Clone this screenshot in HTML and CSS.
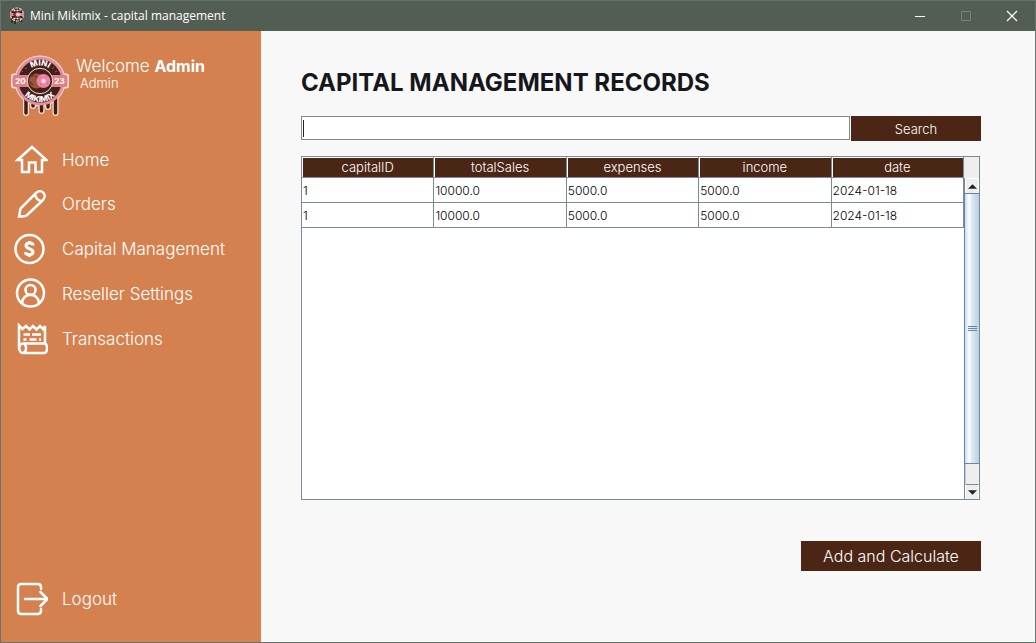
FILE: index.html
```html
<!DOCTYPE html>
<html lang="en">
<head>
<meta charset="utf-8">
<title>Mini Mikimix - capital management</title>
<link rel="stylesheet" href="styles.css">
</head>
<body>
<div class="window">
  <header class="titlebar">
    <svg class="app-icon" viewBox="0 0 16 18" aria-hidden="true">
      <path d="M3 11v5M6 12v5M9.500 12v3M12.500 11v4" stroke="#2b1510" stroke-width="1.300"/>
      <circle cx="8" cy="7.500" r="6.500" fill="#3a1812" stroke="#f3d3cf" stroke-width="1.200" stroke-dasharray="3 1"/>
      <path d="M1 6h14v3H1z" fill="#dd8a95"/>
      <path d="M4.500 3.500h7M4.500 11.500h7" stroke="#fff" stroke-width="1.500" stroke-dasharray="2 1"/>
      <circle cx="6.500" cy="7.500" r="2.300" fill="#7a2f22"/><circle cx="9" cy="7.500" r="2.300" fill="#f4b3c0"/><circle cx="9" cy="7.500" r=".8" fill="#fff"/>
    </svg>
    <span class="titlebar-text">Mini Mikimix - capital management</span>
    <div class="window-controls">
      <button type="button" aria-label="Minimize"><svg viewBox="0 0 12 12"><path d="M1 6.500h10" stroke="#fff"/></svg></button>
      <button type="button" aria-label="Maximize" disabled><svg viewBox="0 0 12 12"><path d="M1.500 1.500h9v9h-9z" fill="none" stroke="#78827a"/></svg></button>
      <button type="button" aria-label="Close"><svg viewBox="0 0 12 12"><path d="M1 1l10 10M11 1L1 11" stroke="#fff" stroke-width="1.200"/></svg></button>
    </div>
  </header>
  <div class="body">
    <aside class="sidebar">
      <div class="profile">
        <svg class="logo" viewBox="0 0 58 62" role="img" aria-label="Mini Mikimix">
          <defs>
            <path id="arc-top" d="M13.500 26a15.500 15.500 0 0 1 31 0"/>
            <path id="arc-bottom" d="M8 26a21 21 0 0 0 42 0"/>
          </defs>
          <path d="M10 36q5 3 5 9v13M22 45v6M30.500 46v10M37 46v6M44.500 42v16M44.500 43q0-4 3.500-7" fill="none" stroke="#f7e3d6" stroke-width="6" stroke-linecap="round" stroke-linejoin="round"/>
          <circle cx="29" cy="26" r="25.500" fill="#f7e3d6"/>
          <rect x="0" y="18.500" width="58" height="15" rx="3" fill="#f7e3d6"/>
          <path d="M10 36q5 3 5 9v13M22 45v6M30.500 46v10M37 46v6M44.500 42v16M44.500 43q0-4 3.500-7" fill="none" stroke="#3f1d16" stroke-width="3.500" stroke-linecap="round" stroke-linejoin="round"/>
          <circle cx="29" cy="26" r="23" fill="#43201a" stroke="#e58f9d" stroke-width="3"/>
          <rect x="1.500" y="20" width="55" height="12" rx="2" fill="#dd7f8d"/>
          <circle cx="29" cy="26" r="12.700" fill="#43201a" stroke="#f5dfd2" stroke-width="1"/>
          <circle cx="25.500" cy="26" r="7.500" fill="#9a5635"/><path d="M20 22l3-2M19 27l3 3M24 21l3 2" stroke="#6f3525" stroke-width="1.500"/>
          <circle cx="32.500" cy="26" r="7" fill="#f083a5"/><circle cx="32.500" cy="26" r="2.200" fill="#fbe5df"/><path d="M28 24l2-2M35 21l1 1M29 29l2 1M36 29l1-2" stroke="#d9618b"/>
          <path d="M14 13l2 1M43 12l-2 2M11 16l1 1M46 16l-2 1" stroke="#9b5a50"/>
          <text class="logo-word"><textPath href="#arc-top" startOffset="50%">MINI</textPath></text>
          <text class="logo-word"><textPath href="#arc-bottom" startOffset="50%">MIKIMIX</textPath></text>
          <text class="logo-year" x="9.500" y="29">20</text><text class="logo-year" x="48.500" y="29">23</text>
        </svg>
        <div class="greeting">
          <div class="welcome">Welcome <strong>Admin</strong></div>
          <div class="role">Admin</div>
        </div>
      </div>
      <nav class="nav">
        <a href="#"><svg viewBox="0 0 34 34"><path d="M3.500 17L18 4l14.500 13H28v12h-6.500v-9.500h-6.500V29H8V17z"/></svg>Home</a>
        <a href="#"><svg viewBox="0 0 34 34"><path d="M5 29.500l1.500-8L22 6c5-5 12 1.500 7 7L13 28q-1 1.500-8 1.500zM21 7.500q1 5 6.500 7"/></svg>Orders</a>
        <a href="#"><svg viewBox="0 0 34 34"><circle cx="15.500" cy="17" r="14"/><path d="M19 13.500c0-3-7-3.500-7 0 0 4 7 2.500 7 6.500 0 3.500-7.500 3.500-7.500 0M15.500 9v2M15.500 22.500v2.500" stroke-width="3"/></svg>Capital Management</a>
        <a href="#"><svg viewBox="0 0 34 34"><circle cx="16.500" cy="16" r="13.500"/><circle cx="16.500" cy="13" r="5"/><path d="M8 26c1-11 16-11 17 0"/></svg>Reseller Settings</a>
        <a href="#"><svg viewBox="0 0 34 34"><path d="M5 27V3.500L8.500 7 12 4l3.500 3.500L19 4l3.500 3.500L26 4l3.500 3.500L31 4v18M9 21.500h21c4 0 4 9.500 0 9.500H9c-5 0-5-9.500 0-9.500zM9.500 21.500c3.500 2 3.500 7.500 0 9.500M9.500 12.500h6.500M18 12.500h9M9.500 17.500h3M15.500 17.500h7M25 17.500h2"/></svg>Transactions</a>
      </nav>
      <a class="logout" href="#"><svg viewBox="0 0 34 34"><path d="M27 7V5c0-2-1.500-3-3.500-3H7C5 2 4 3.500 4 5.500v23C4 31 5 32 7 32h16.500c2 0 3.500-1 3.500-3v-2M11 17h22M26.500 10l7 7-7 7"/></svg>Logout</a>
    </aside>
    <main class="content">
      <h1>CAPITAL MANAGEMENT RECORDS</h1>
      <form class="search">
        <div class="search-field"><input type="text" aria-label="Search records"></div>
        <button type="button">Search</button>
      </form>
      <section class="records">
        <div class="table-area">
          <table>
            <thead><tr><th>capitalID</th><th>totalSales</th><th>expenses</th><th>income</th><th>date</th></tr></thead>
            <tbody>
              <tr><td>1</td><td>10000.0</td><td>5000.0</td><td>5000.0</td><td>2024-01-18</td></tr>
              <tr><td>1</td><td>10000.0</td><td>5000.0</td><td>5000.0</td><td>2024-01-18</td></tr>
            </tbody>
          </table>
        </div>
        <div class="scroll">
          <div class="corner"></div>
          <div class="scrollbar">
            <button class="arrow" type="button" aria-label="Scroll up"><svg viewBox="0 0 8 4"><path d="M0 4l4-4 4 4z"/></svg></button>
            <div class="track"><div class="thumb"><i></i><i></i><i></i></div></div>
            <button class="arrow arrow-down" type="button" aria-label="Scroll down"><svg viewBox="0 0 8 4"><path d="M0 0h8L4 4z"/></svg></button>
          </div>
        </div>
      </section>
      <button class="calculate" type="button">Add and Calculate</button>
    </main>
  </div>
</div>
</body>
</html>
```
FILE: styles.css
```css
* { box-sizing: border-box; }
body { margin: 0; font-family: "Century Gothic", Inter, sans-serif; font-weight: 300; }
button, input { font: inherit; border: 0; border-radius: 0; padding: 0; margin: 0; }
a { color: inherit; text-decoration: none; }

.window { min-height: 100vh; display: flex; flex-direction: column; border: 1px solid #65756a; background: #f8f8f8; }
.titlebar { height: 30px; flex: none; display: flex; align-items: center; padding-left: 8px; background: #525e54; color: #fff; }
.app-icon { width: 16px; height: 18px; margin-right: 5px; }
.titlebar-text { font: 400 12px/16px "Segoe UI", "Open Sans", sans-serif; }
.window-controls { margin-left: auto; display: flex; height: 100%; }
.window-controls button { width: 46px; background: none; display: grid; place-items: center; }
.window-controls svg { width: 12px; height: 12px; }

.body { flex: 1; display: flex; }
.sidebar { width: 260px; flex: none; display: flex; flex-direction: column; padding: 24px 0 21px; background: #d4814f; color: #fff; }
.profile { display: flex; height: 83px; padding-left: 10px; }
.logo { width: 58px; height: 62px; margin-right: 7px; }
.logo-word { font: 800 8px Inter, sans-serif; fill: #fff; text-anchor: middle; }
.logo-year { font: 800 8px Inter, sans-serif; fill: #fff3df; text-anchor: middle; }
.welcome { font-size: 17px; line-height: 22px; }
.welcome strong { font-size: 16px; font-weight: 700; }
.role { font-size: 13px; line-height: 12px; padding-left: 4px; }
.nav { display: flex; flex-direction: column; }
.nav a, .logout { display: flex; align-items: center; gap: 14px; height: 45px; padding-left: 13px; font-size: 17px; }
.nav a:first-child { height: 43px; }
.nav svg, .logout svg { width: 34px; height: 34px; fill: none; stroke: #fff; stroke-width: 2.500px; }
.logout { margin-top: auto; }
.logout svg { stroke-linecap: round; stroke-linejoin: round; }

.content { flex: 1; min-width: 0; display: flex; flex-direction: column; padding: 36px 54px 71px 40px; }
h1 { margin: 0 0 17px; font-size: 24px; line-height: 32px; font-weight: 700; color: #15171c; white-space: nowrap; }
.search { display: flex; height: 25px; margin-bottom: 15px; }
.search-field { flex: 1; position: relative; padding: 0 1px 1px 0; }
.search-field input { display: block; width: 100%; height: 24px; padding: 0 4px; border: 1px solid #7a8a99; background: #fff; font-size: 13px; }
.search-field::after { content: ""; position: absolute; left: 2px; top: 4px; width: 1px; height: 17px; background: #222; }
.search button { width: 130px; background: #4b2615; color: #fff; font-size: 13px; }

.records { flex: 1; display: flex; margin: 0 1px 41px 0; border: 1px solid #7a8a99; background: #fff; }
.table-area { flex: 1; }
table { width: 100%; table-layout: fixed; border-collapse: separate; border-spacing: 0; }
th { height: 21px; padding: 1px 0 0; font-size: 13px; line-height: 19px; font-weight: 300; color: #fff; background: #4b2615; border: solid #7a8a99; border-width: 0 1px 1px 0; box-shadow: inset 1px 1px #fff; }
td { height: 25px; padding: 1px 0 0 1px; font-size: 12px; line-height: 23px; font-weight: 300; color: #000; border: solid #7a8a99; border-width: 0 1px 1px 0; }
.scroll { width: 15px; display: flex; flex-direction: column; background: #eee; }
.corner { height: 21px; }
.scrollbar { flex: 1; display: flex; flex-direction: column; border-left: 1px solid #7a8a99; }
.arrow { height: 15px; flex: none; display: grid; place-items: center; background: #eee; border: solid #fff; border-width: 1px 1px 0 1px; }
.arrow-down { border-top-color: #7a8a99; }
.arrow svg { width: 9px; height: 5px; fill: #222; }
.track { flex: 1; border-left: 1px solid #b8cfe5; }
.thumb { height: 93%; margin-left: -2px; display: flex; flex-direction: column; align-items: center; justify-content: center; gap: 1px; border: solid #6382bf; border-width: 1px 0 1px 1px; background: linear-gradient(90deg, #c8dcf0, #fff 30%, #dce8f3 50%, #b8cfe5); }
.thumb i { width: 9px; height: 1px; background: #6382bf; }

.calculate { align-self: flex-end; width: 180px; height: 30px; background: #4b2615; color: #fff; font-size: 16px; }
```
